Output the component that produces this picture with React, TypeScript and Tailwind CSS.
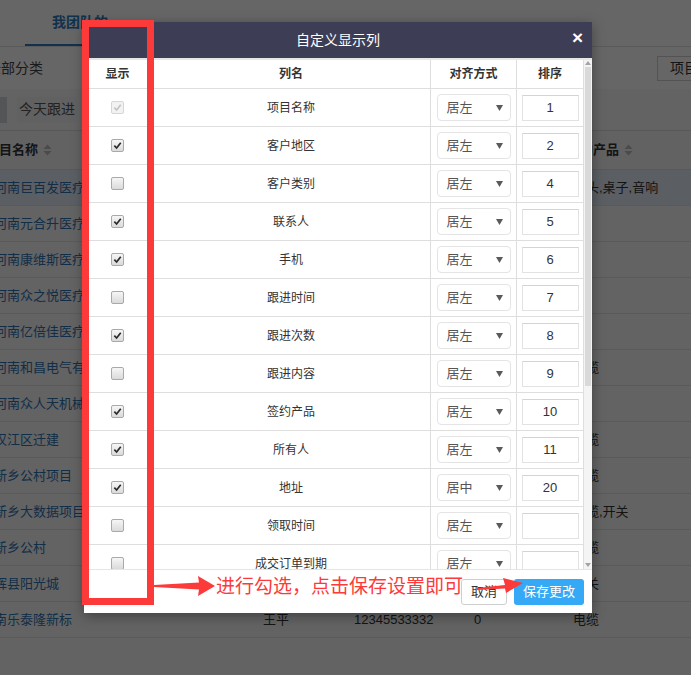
import React from 'react'

type ColumnSetting = {
  name: string
  show: boolean
  locked?: boolean
  align: string
  order: string
}

const columnSettings: ColumnSetting[] = [
  { name: '项目名称', show: true, locked: true, align: '居左', order: '1' },
  { name: '客户地区', show: true, align: '居左', order: '2' },
  { name: '客户类别', show: false, align: '居左', order: '4' },
  { name: '联系人', show: true, align: '居左', order: '5' },
  { name: '手机', show: true, align: '居左', order: '6' },
  { name: '跟进时间', show: false, align: '居左', order: '7' },
  { name: '跟进次数', show: true, align: '居左', order: '8' },
  { name: '跟进内容', show: false, align: '居左', order: '9' },
  { name: '签约产品', show: true, align: '居左', order: '10' },
  { name: '所有人', show: true, align: '居左', order: '11' },
  { name: '地址', show: true, align: '居中', order: '20' },
  { name: '领取时间', show: false, align: '居左', order: '' },
  { name: '成交订单到期', show: false, align: '居左', order: '' },
]

const projects = [
  { name: '河南巨百发医疗器械有限公司', owner: '', phone: '', count: '', product: '插头,桌子,音响' },
  { name: '河南元合升医疗器械', owner: '', phone: '', count: '', product: '' },
  { name: '河南康维斯医疗器械', owner: '', phone: '', count: '', product: '' },
  { name: '河南众之悦医疗器械', owner: '', phone: '', count: '', product: '' },
  { name: '河南亿倍佳医疗器械', owner: '', phone: '', count: '', product: '' },
  { name: '河南和昌电气有限公司', owner: '', phone: '', count: '', product: '电缆' },
  { name: '河南众人天机械设备', owner: '', phone: '', count: '', product: '' },
  { name: '汉江区迁建', owner: '', phone: '', count: '', product: '电缆' },
  { name: '新乡公村项目', owner: '', phone: '', count: '', product: '电缆' },
  { name: '新乡大数据项目', owner: '', phone: '', count: '', product: '电缆,开关' },
  { name: '新乡公村', owner: '', phone: '', count: '', product: '电缆' },
  { name: '辉县阳光城', owner: '', phone: '', count: '', product: '开关' },
  { name: '南乐泰隆新标', owner: '王平', phone: '12345533332', count: '0', product: '电缆' },
]

function SortIcon() {
  return (
    <svg width="9" height="12" viewBox="0 0 9 12" className="ml-[5px] inline-block">
      <path d="M4.5 0.5 L8.5 5 L0.5 5 Z" fill="#bbb" />
      <path d="M4.5 11.5 L8.5 7 L0.5 7 Z" fill="#bbb" />
    </svg>
  )
}

function Checkbox({ checked, locked }: { checked: boolean; locked?: boolean }) {
  return (
    <span
      className={`flex h-[13px] w-[13px] items-center justify-center rounded-[2px] border ${
        locked
          ? 'border-[#d6d6d6] bg-[#f2f2f2]'
          : 'border-[#a9a9a9] bg-gradient-to-b from-[#f6f6f6] to-[#dadada]'
      }`}
    >
      {checked && (
        <svg width="9" height="9" viewBox="0 0 10 10">
          <path
            d="M1.5 5.2 L4 7.8 L8.6 2"
            stroke={locked ? '#c4c4c4' : '#2b2b2b'}
            strokeWidth="1.9"
            fill="none"
          />
        </svg>
      )}
    </span>
  )
}

function AlignSelect({ value }: { value: string }) {
  return (
    <div className="flex h-[27px] w-[74px] items-center justify-between rounded-[4px] border border-[#e4e4e4] pl-[9px] pr-[7px] text-[13px] text-[#555]">
      <span>{value}</span>
      <svg width="7" height="6" viewBox="0 0 7 6">
        <path d="M0 0 L7 0 L3.5 6 Z" fill="#5a5a5a" />
      </svg>
    </div>
  )
}

function ColumnDialog() {
  return (
    <div className="absolute left-[84px] top-[22px] w-[508px] bg-white shadow-[0_3px_12px_rgba(0,0,0,0.35)]">
      <div className="relative flex h-[36px] items-center justify-center bg-[#3d3e55] text-[14px] text-white">
        自定义显示列
        <span className="absolute right-[9px] top-[6px] text-[19px] font-bold leading-none">×</span>
      </div>
      <div className="flex h-[511px] overflow-hidden border-t-2 border-[#e6e6e6]">
        <div className="w-[500px] text-[12px] text-[#333]">
          <div className="grid h-[29px] grid-cols-[68px_279px_86px_67px] border-b border-[#dedede] font-bold">
            <div className="flex items-center justify-center border-r border-[#dedede]">显示</div>
            <div className="flex items-center justify-center border-r border-[#dedede]">列名</div>
            <div className="flex items-center justify-center border-r border-[#dedede]">对齐方式</div>
            <div className="flex items-center justify-center border-r border-[#dedede]">排序</div>
          </div>
          {columnSettings.map(col => (
            <div
              key={col.name}
              className="grid h-[38px] shrink-0 grid-cols-[68px_279px_86px_67px] border-b border-[#dedede]"
            >
              <div className="flex items-center justify-center border-r border-[#dedede]">
                <Checkbox checked={col.show} locked={col.locked} />
              </div>
              <div className="flex items-center justify-center border-r border-[#dedede]">{col.name}</div>
              <div className="flex items-center justify-center border-r border-[#dedede]">
                <AlignSelect value={col.align} />
              </div>
              <div className="flex items-center justify-center border-r border-[#dedede]">
                <div className="flex h-[26px] w-[57px] items-center justify-center border border-[#e2e2e2] border-t-[#d4d4d4] text-[13px]">
                  {col.order}
                </div>
              </div>
            </div>
          ))}
        </div>
        {/* scrollbar */}
        <div className="flex w-[8px] flex-col items-center bg-[#f4f4f4]">
          <svg width="6" height="4" viewBox="0 0 6 4" className="mt-[1px]">
            <path d="M3 0 L6 4 L0 4 Z" fill="#a3a3a3" />
          </svg>
          <div className="mt-[2px] h-[319px] w-[6px] bg-[#d9d9d9]" />
          <div className="flex-1" />
          <svg width="6" height="4" viewBox="0 0 6 4" className="mb-[2px]">
            <path d="M0 0 L6 0 L3 4 Z" fill="#a3a3a3" />
          </svg>
        </div>
      </div>
      <div className="flex h-[44px] items-center justify-end gap-[7px] border-t border-[#e5e5e5] pr-[8px]">
        <button className="h-[26px] w-[46px] rounded-[3px] border border-[#cfcfcf] bg-white text-[13px] text-[#333]">
          取消
        </button>
        <button className="h-[26px] w-[70px] rounded-[3px] bg-[#35a9f5] text-[13px] text-white">保存更改</button>
      </div>
    </div>
  )
}

export default function App() {
  return (
    <div className="relative h-[675px] w-[691px] overflow-hidden bg-[#f8f8f8] font-['Liberation_Sans','Noto_Sans_CJK_SC',sans-serif] text-[13px] text-[#333]">
      {/* page behind the dialog */}
      <div className="flex h-[47px] border-b border-[#e2e2e2] bg-white">
        <div className="ml-[25px] flex w-[90px] items-start justify-center border-b-2 border-[#2f7cc0] pl-[20px] pt-[12px] text-[14px] font-bold text-[#2f7cc0]">
          我团队的
        </div>
      </div>
      <div className="flex h-[42px] items-center justify-between bg-white">
        <span className="-ml-[13px] text-[14px] text-[#444]">全部分类</span>
        <div className="mr-[-40px] flex h-[25px] w-[74px] items-center whitespace-nowrap border border-[#d0d0d0] pl-[12px] text-[14px]">
          项目名称
        </div>
      </div>
      <div className="flex h-[41px] items-center gap-[10px]">
        <div className="-ml-[40px] h-[26px] w-[47px] bg-[#d2d4d8]" />
        <div className="flex h-[26px] w-[60px] items-center justify-center bg-[#f2f2f2] text-[14px] text-[#555]">
          今天跟进
        </div>
      </div>
      <div className="-ml-[6px]">
        <div className="grid h-[40px] grid-cols-[269px_91px_120px_99px_1fr] items-center border-y border-[#dcdcdc] bg-[#f4f4f4] font-bold">
          <div className="-ml-[8px] flex items-center whitespace-nowrap">
            项目名称
            <SortIcon />
          </div>
          <div />
          <div />
          <div />
          <div className="-ml-[6px] flex items-center whitespace-nowrap">
            签约产品
            <SortIcon />
          </div>
        </div>
        {projects.map((p, i) => (
          <div
            key={p.name}
            className={`grid h-[36px] grid-cols-[269px_91px_120px_99px_1fr] items-center border-b border-[#e2e2e2] ${
              i === 0 ? 'bg-[#e4ebf6]' : 'bg-[#f8f8f8]'
            }`}
          >
            <div className="truncate text-[#2f73b2]">{p.name}</div>
            <div>{p.owner}</div>
            <div>{p.phone}</div>
            <div>{p.count}</div>
            <div className="whitespace-nowrap">{p.product}</div>
          </div>
        ))}
      </div>

      {/* modal backdrop */}
      <div className="absolute inset-0 bg-black/60" />

      <ColumnDialog />

      {/* annotation */}
      <div className="absolute left-[82px] top-[20px] h-[585px] w-[72px] border-[7px] border-[#fd3a3a]" />
      <svg className="pointer-events-none absolute left-0 top-0" width="691" height="675" viewBox="0 0 691 675">
        <path d="M154 585 L199 582.5 L198 576 L215 586 L198 596 L199 589.5 L154 587 Z" fill="#fd3a3a" />
        <path d="M477 588 L505 585 L503 578 L523 583 L506 593 L505 588.5 L477 590 Z" fill="#fd3a3a" />
      </svg>
      <div className="absolute left-[216px] top-[574px] whitespace-nowrap text-[19px] leading-[26px] text-[#fd3a3a]">
        进行勾选，点击保存设置即可
      </div>
    </div>
  )
}
